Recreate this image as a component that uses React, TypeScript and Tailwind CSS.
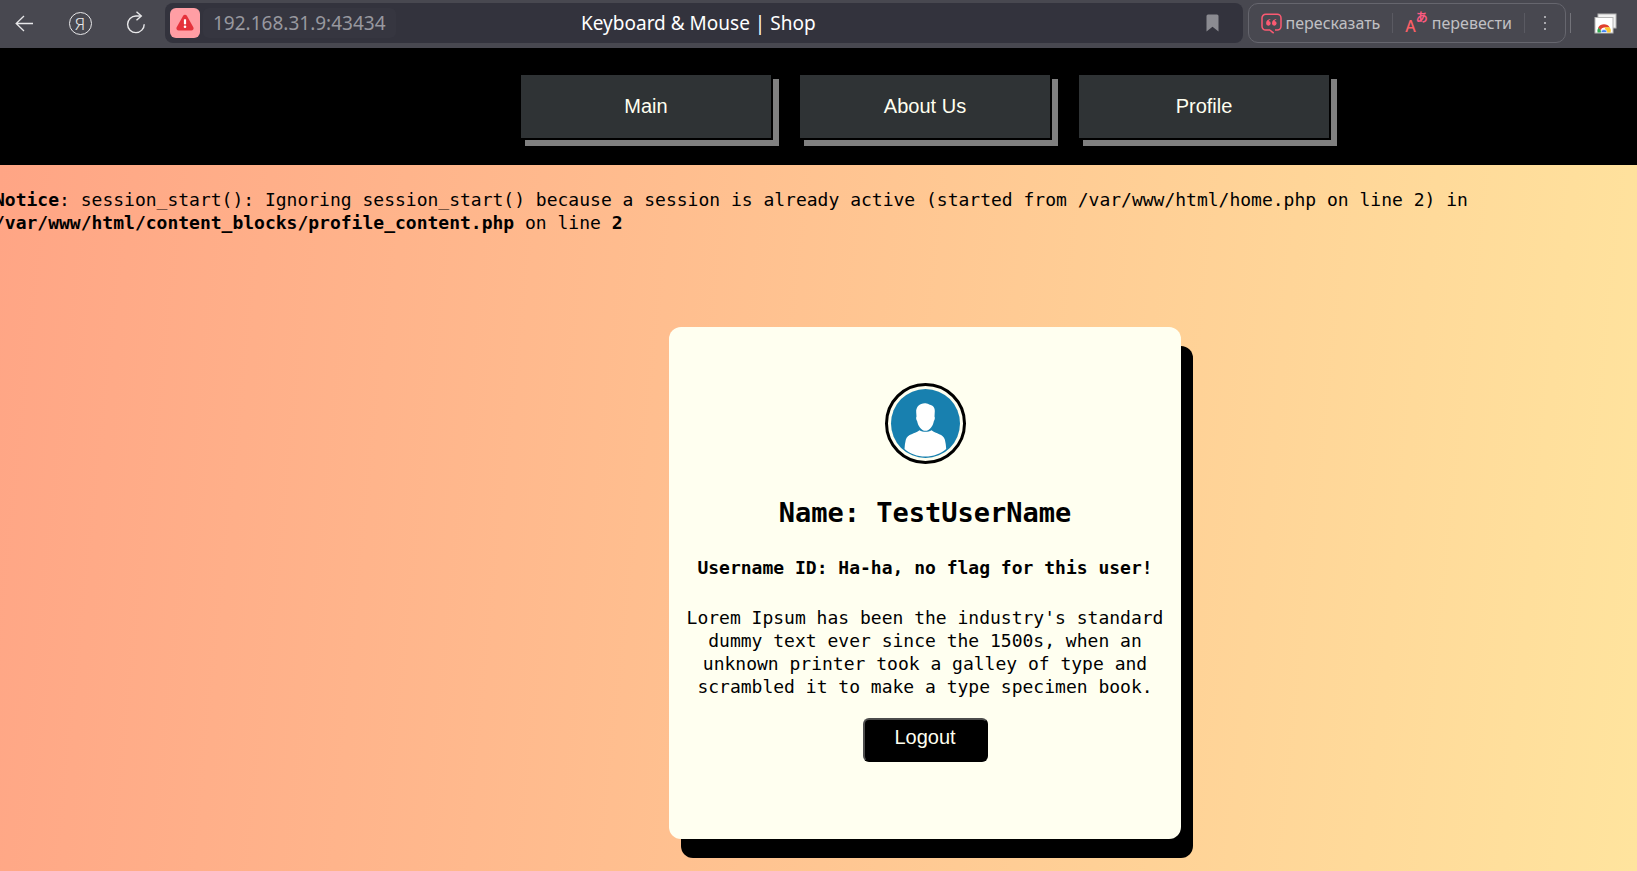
const NAV_ITEMS = ["Main", "About Us", "Profile"];

function BackIcon() {
  return (
    <svg width="20" height="20" viewBox="0 0 20 20" fill="none" stroke="#e8e8ea" strokeWidth="1.3">
      <path d="M19 10.500H2.200M10 3 2.200 10.500 10 18" />
    </svg>
  );
}

function HomeIcon() {
  return (
    <span className="flex size-[23px] items-center justify-center rounded-full border border-[#e8e8ea] text-[17px] leading-none font-light text-[#e8e8ea]">
      Я
    </span>
  );
}

function ReloadIcon() {
  return (
    <svg width="20" height="24" viewBox="0 0 20 24" fill="none" stroke="#e8e8ea" strokeWidth="1.4">
      <path d="M18.200 13.200A8.300 8.300 0 1 1 10 5h5" />
      <path d="m10.500.8 4.800 4.200-4.800 4.200" />
    </svg>
  );
}

function WarningIcon() {
  return (
    <svg width="20" height="18" viewBox="0 0 20 18">
      <path d="M8 1.900a2.300 2.300 0 0 1 4 0l6.300 11.300a2.300 2.300 0 0 1-2 3.400H3.700a2.300 2.300 0 0 1-2-3.400z" fill="#e5323b" />
      <path d="M10 5.300v5" stroke="#fff" strokeWidth="2.200" />
      <circle cx="10" cy="12.800" r="1.300" fill="#fff" />
    </svg>
  );
}

function BookmarkIcon() {
  return (
    <svg width="13" height="18" viewBox="0 0 13 18">
      <path d="M2 .5h9A1.500 1.500 0 0 1 12.500 2v15.500l-6-4.700-6 4.700V2A1.500 1.500 0 0 1 2 .5z" fill="#8b8b91" />
    </svg>
  );
}

function QuoteIcon() {
  return (
    <svg width="21" height="21" viewBox="0 0 21 21" fill="none">
      <path
        d="M14 17h2.300a3.700 3.700 0 0 0 3.700-3.700V5a3.700 3.700 0 0 0-3.700-3.700H4.700A3.700 3.700 0 0 0 1 5v8.300A3.700 3.700 0 0 0 4.700 17h4l4 3.200"
        stroke="#fb5a72"
        strokeWidth="1.500"
      />
      <path
        d="M9.300 6C7 6.300 5.100 7.800 5.100 10.300a2.300 2.300 0 1 0 2.600-2.200c.2-.8.8-1.200 1.600-1.400zM15.200 6c-2.300.3-4.200 1.800-4.200 4.300a2.300 2.300 0 1 0 2.600-2.200c.2-.8.8-1.200 1.600-1.400z"
        fill="#fb5a72"
      />
    </svg>
  );
}

function TranslateIcon() {
  return (
    <span className="flex items-start font-['Noto_Sans','Noto_Sans_CJK_JP',sans-serif] leading-none">
      <span className="pt-1.5 text-[16px] leading-none font-medium text-[#fb5f66]">A</span>
      <span className="text-[12px] leading-none font-bold text-[#fb5a80]">あ</span>
    </span>
  );
}

function DotsIcon() {
  return (
    <svg width="4" height="16" viewBox="0 0 4 16" fill="#a9a9ae">
      <rect x="1" y="1" width="2" height="2" />
      <rect x="1" y="7" width="2" height="2" />
      <rect x="1" y="13" width="2" height="2" />
    </svg>
  );
}

function TabsIcon() {
  return (
    <svg width="23" height="21" viewBox="0 0 23 21">
      <rect x="4" y="1" width="18" height="14" fill="#f1f1f1" stroke="#b5b5b5" />
      <rect x="1" y="4.500" width="18" height="15.500" fill="#fff" stroke="#b5b5b5" />
      <path d="M3.500 19.500a6.500 6.500 0 0 1 1.200-5.300l3.300 5.300z" fill="#2fa84f" />
      <path d="M4.200 14.500a6.700 6.700 0 0 1 11.600 0H10a3.500 3.500 0 0 0-3.200 2.800z" fill="#e0402f" />
      <path d="M10.500 14.300h5.300a6.500 6.500 0 0 1 .8 5.200h-4.300z" fill="#fbc934" />
      <path d="M7 19.500a3 3 0 0 1 6 0z" fill="#4285f4" stroke="#fff" strokeWidth=".6" />
    </svg>
  );
}

function Avatar() {
  return (
    <svg width="81" height="81" viewBox="0 0 81 81" role="img" aria-label="User avatar">
      <circle cx="40.500" cy="40.500" r="39" fill="none" stroke="#000" strokeWidth="3" />
      <circle cx="40.500" cy="40.500" r="34.500" fill="#1880af" />
      <path
        d="M34.500 47.200c-4.500 4-12 3.200-13.700 9.500-.7 2.900-1.200 6.200-1.300 9.200 5.500 4.600 12.700 7.600 20.800 7.600s15.300-3 20.900-7.600c-.1-3-.6-6.300-1.300-9.200C58.200 50.400 51 51.200 46.500 47.200c-3.500 2.200-8.500 2.200-12 0z"
        fill="#fff"
      />
      <path
        d="M40.500 20.200c-5.700-.3-9.700 3.500-9.300 9l.3 4.300c-.7.9-.3 3.500.6 4.400.9 5 4.300 9.900 8.400 9.900s7.600-4.900 8.400-9.900c.9-.9 1.300-3.500.6-4.400l.3-5.300c.2-3.800-2-6-5-6.500-1.200-.9-2.700-1.400-4.300-1.500z"
        fill="#fff"
      />
    </svg>
  );
}

function BrowserBar() {
  return (
    <header className="flex h-12 items-center bg-[#484850] pt-[3px] pb-[5px] font-['Noto_Sans',sans-serif]">
      <div className="flex gap-4 pr-[9px] pl-1">
        <button aria-label="Back" className="flex size-10 items-center justify-center">
          <BackIcon />
        </button>
        <button aria-label="Home" className="flex size-10 items-center justify-center">
          <HomeIcon />
        </button>
        <button aria-label="Reload" className="flex size-10 items-center justify-center">
          <ReloadIcon />
        </button>
      </div>
      <div className="grid h-10 flex-1 grid-cols-[1fr_auto_1fr] items-center rounded-lg bg-[#33333d] pr-4 pl-[5px]">
        <div className="flex items-center gap-[3px]">
          <button
            aria-label="Connection not secure"
            className="flex size-[30px] items-center justify-center rounded-md bg-[#ff9ea4]"
          >
            <WarningIcon />
          </button>
          <span className="rounded-md bg-[#363640] px-2.5 text-[19px] leading-[30px] text-[#98989f]">
            192.168.31.9:43434
          </span>
        </div>
        <span className="text-[19px] leading-[30px] text-white">Keyboard &amp; Mouse | Shop</span>
        <button aria-label="Bookmark" className="flex w-7 justify-center justify-self-end">
          <BookmarkIcon />
        </button>
      </div>
      <div className="ml-[5px] flex h-10 items-center rounded-[10px] border border-[#66666e] text-[16px] text-[#c0c0c4]">
        <button className="flex items-center gap-1 px-3">
          <QuoteIcon />
          пересказать
        </button>
        <span className="h-5 w-px bg-[#5a5a62]" />
        <button className="flex items-center gap-1 px-3">
          <TranslateIcon />
          перевести
        </button>
        <span className="h-5 w-px bg-[#5a5a62]" />
        <button aria-label="More" className="flex w-10 justify-center">
          <DotsIcon />
        </button>
      </div>
      <span className="ml-1 h-5 w-px bg-[#73737a]" />
      <button aria-label="Tabs" className="mr-5 ml-[23px]">
        <TabsIcon />
      </button>
    </header>
  );
}

export default function App() {
  return (
    <div className="flex min-h-screen flex-col overflow-x-hidden">
      <BrowserBar />
      <nav className="flex justify-center gap-[25px] bg-black py-[25px] pl-[213px] font-['Liberation_Sans',sans-serif]">
        {NAV_ITEMS.map((item) => (
          <a
            key={item}
            href="#"
            className="flex h-[67px] w-[254px] items-center justify-center border-2 border-black bg-[#2f3335] pb-0.5 text-[20px] text-[#fffff0] shadow-[6px_6px_0_gray]"
          >
            {item}
          </a>
        ))}
      </nav>
      <main className="flex-1 bg-linear-[96deg,#ffa585,#ffe49e] font-['DejaVu_Sans_Mono','Liberation_Mono',monospace] text-[18px] leading-[23px] text-black">
        <p className="-ml-1.5 pt-[23px]">
          <b>Notice</b>: session_start(): Ignoring session_start() because a session is already active (started from
          /var/www/html/home.php on line 2) in <b>/var/www/html/content_blocks/profile_content.php</b> on line{" "}
          <b>2</b>
        </p>
        <div className="flex justify-center pt-[93px] pb-8 pl-[213px]">
          <section className="flex min-h-[512px] w-[512px] flex-col items-center rounded-xl bg-[#fffff0] px-3 pt-14 text-center shadow-[12px_19px_0_#000]">
            <Avatar />
            <h1 className="mt-[33px] text-[27px] leading-8 font-bold">Name: TestUserName</h1>
            <p className="mt-[27px] font-bold">Username ID: Ha-ha, no flag for this user!</p>
            <p className="mt-[27px]">
              Lorem Ipsum has been the industry's standard dummy text ever since the 1500s, when an unknown printer took
              a galley of type and scrambled it to make a type specimen book.
            </p>
            <button className="mt-5 h-11 w-[125px] rounded-md border-2 border-black border-t-[#4c4c4c] border-l-[#4c4c4c] bg-black pb-1.5 font-['Liberation_Sans',sans-serif] text-[20px] text-[#fffff0]">
              Logout
            </button>
          </section>
        </div>
      </main>
    </div>
  );
}
